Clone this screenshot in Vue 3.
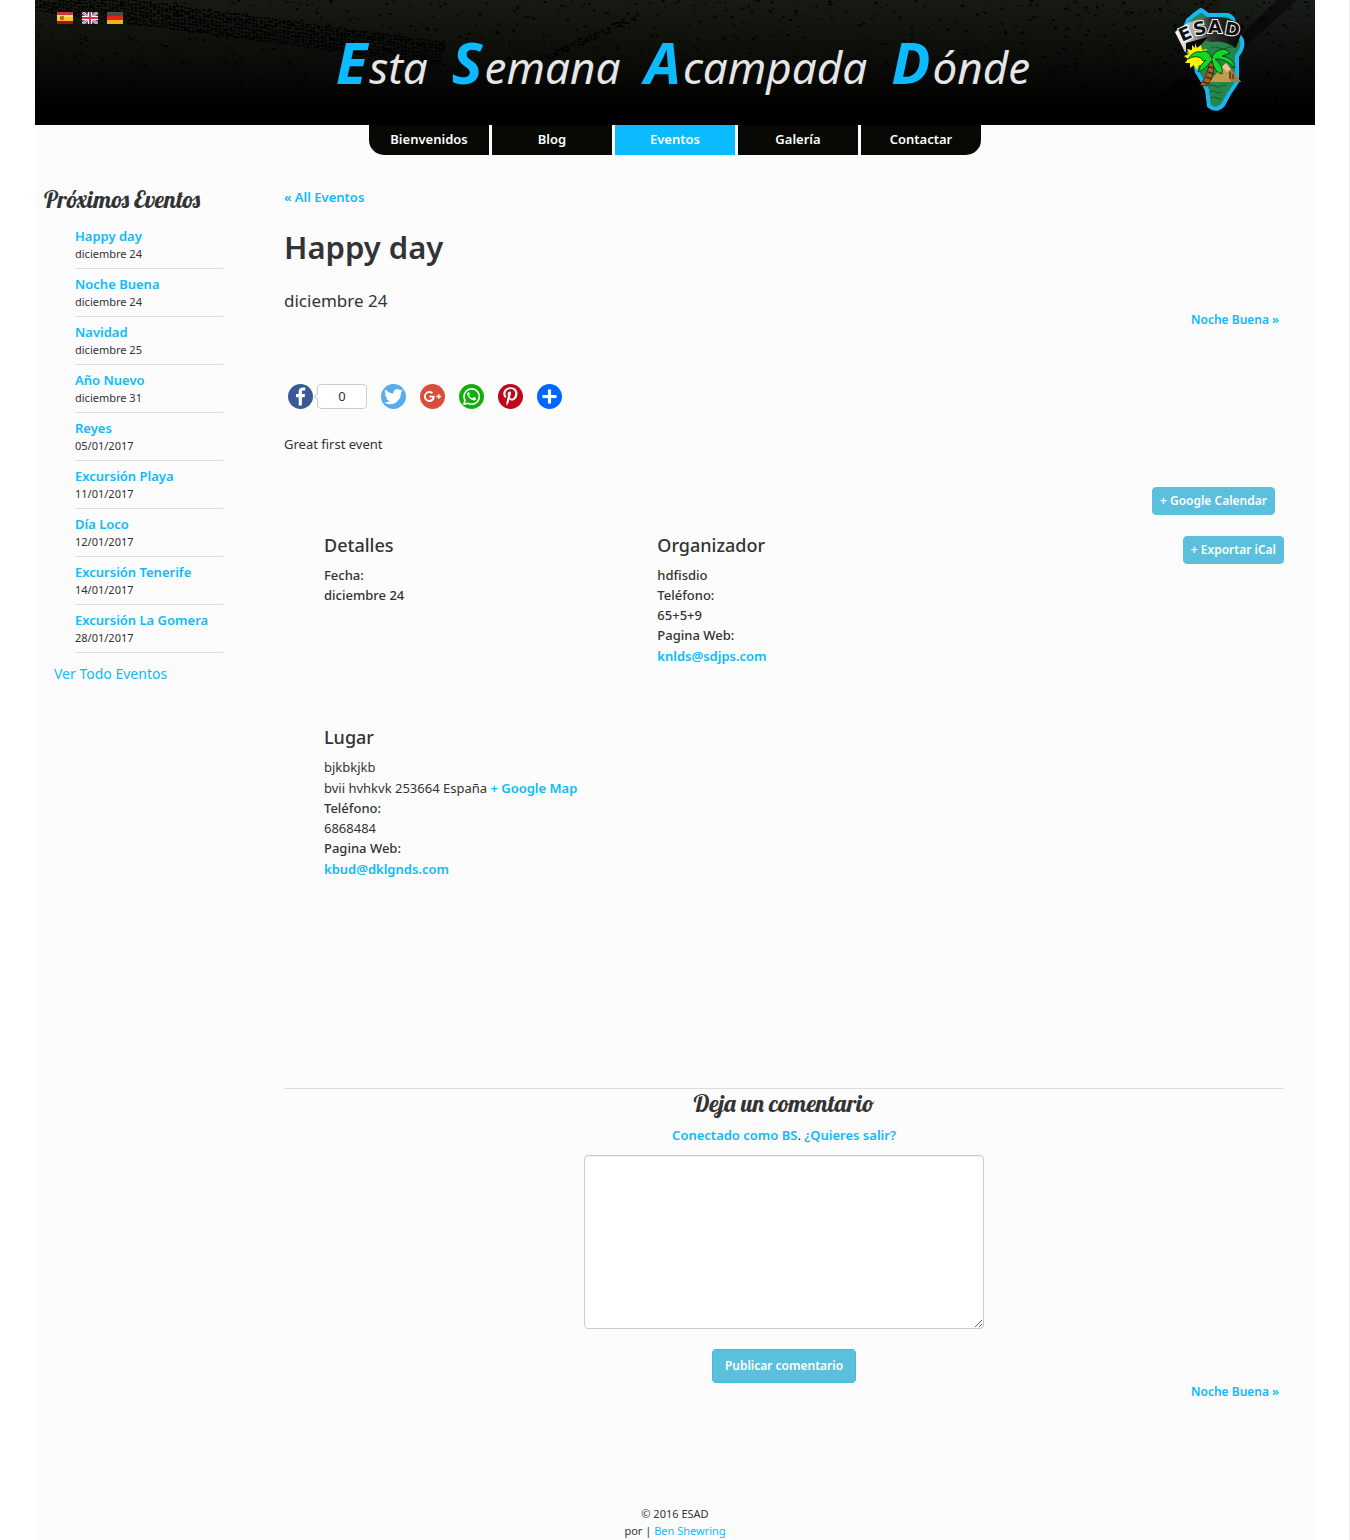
<script setup>
import { ref } from 'vue'

const navItems = [
  { label: 'Bienvenidos' },
  { label: 'Blog' },
  { label: 'Eventos', active: true },
  { label: 'Galería' },
  { label: 'Contactar' },
]

const titleWords = [
  ['E', 'sta'],
  ['S', 'emana'],
  ['A', 'campada'],
  ['D', 'ónde'],
]

const upcoming = [
  { title: 'Happy day', date: 'diciembre 24' },
  { title: 'Noche Buena', date: 'diciembre 24' },
  { title: 'Navidad', date: 'diciembre 25' },
  { title: 'Año Nuevo', date: 'diciembre 31' },
  { title: 'Reyes', date: '05/01/2017' },
  { title: 'Excursión Playa', date: '11/01/2017' },
  { title: 'Día Loco', date: '12/01/2017' },
  { title: 'Excursión Tenerife', date: '14/01/2017' },
  { title: 'Excursión La Gomera', date: '28/01/2017' },
]

const comment = ref('')

// Seeded generator so that the grit of the banner is the same on every load
let seed = 7
function rand() {
  seed = (seed * 16807) % 2147483647
  return seed / 2147483647
}

function blob(x, y, r) {
  return `M${x.toFixed(1)} ${y.toFixed(1)}h${(r * 1.4).toFixed(1)}l${(r * 0.4).toFixed(1)} ${r.toFixed(1)}h${(-r * 1.5).toFixed(1)}z`
}

const specks = Array.from({ length: 1100 }, () =>
  blob(rand() * 1280, Math.pow(rand(), 1.2) * 110, 0.7 + rand() * 1.6)
).join('')

const tread = Array.from({ length: 860 }, (_, i) => {
  const x = Math.floor(i / 8) * 3.8
  const y = (i % 8) * 3.2 + x * 0.135 - 14 + rand() * 2
  return blob(x + rand(), y, 1.4 + rand() * 0.8)
}).join('')

const skid = Array.from({ length: 120 }, () => {
  const t = rand()
  return blob(495 + t * 110, 60 - t * 50 + rand() * 7, 0.6 + rand() * 1.6)
}).join('')
</script>

<template>
  <div class="page">
    <header class="banner">
      <svg class="grit" viewBox="0 0 1280 125" preserveAspectRatio="xMidYMin slice" aria-hidden="true">
        <defs>
          <linearGradient id="fade" x1="0" y1="0" x2="0" y2="1">
            <stop offset="0" stop-color="#171a12" />
            <stop offset="0.45" stop-color="#0c0d09" />
            <stop offset="0.85" stop-color="#010101" />
            <stop offset="1" stop-color="#000" />
          </linearGradient>
          <linearGradient id="glow" x1="0" y1="0" x2="0" y2="1">
            <stop offset="0" stop-color="#1b2322" />
            <stop offset="1" stop-color="#000" stop-opacity="0" />
          </linearGradient>
        </defs>
        <rect width="1280" height="125" fill="url(#fade)" />
        <path d="M1190 0H1280V30L1190 110H1100L1150 60Z" fill="url(#glow)" opacity=".4" />
        <path d="M1242 0H1262L1184 70L1150 96H1120L1190 50Z" fill="#000" opacity=".5" />
        <path :d="specks" fill="#000" opacity=".85" />
        <path :d="tread" fill="#000" />
        <path :d="skid" fill="#000" />
      </svg>

      <div class="languages">
        <a href="#es" aria-label="Español">
          <svg width="16" height="12" viewBox="0 0 16 12">
            <path fill="#c33a45" d="M0 0h16v3H0z" /><path fill="#a5121e" d="M0 9h16v3H0z" />
            <path fill="#f3c72c" d="M0 3h16v6H0z" /><path fill="#f8dc6a" d="M0 3h16v2H0z" />
            <path fill="#b5793c" d="M3 4h4v4H3z" /><path fill="#8d5a55" d="M4 5h2v2H4z" />
          </svg>
        </a>
        <a href="#en" aria-label="English">
          <svg width="16" height="12" viewBox="0 0 16 12">
            <path fill="#2f4d94" d="M0 0h16v12H0z" />
            <path stroke="#f2f2f6" stroke-width="2.6" d="M0 0l16 12M16 0L0 12" />
            <path stroke="#d0374a" d="M0 0l16 12M16 0L0 12" />
            <path fill="#fff" d="M6 0h4v12H6zM0 4h16v4H0z" />
            <path fill="#d3303f" d="M7 0h2v12H7zM0 5h16v2H0z" />
          </svg>
        </a>
        <a href="#de" aria-label="Deutsch">
          <svg width="16" height="12" viewBox="0 0 16 12">
            <path fill="#4d4d4d" d="M0 0h16v4H0z" /><path fill="#e8201a" d="M0 4h16v4H0z" />
            <path fill="#e9b912" d="M0 8h16v4H0z" />
          </svg>
        </a>
      </div>

      <div class="site-title">
        <span v-for="word in titleWords" :key="word[0]"><b>{{ word[0] }}</b>{{ word[1] }}</span>
      </div>

      <svg class="logo" width="72" height="106" viewBox="0 0 72 106" role="img" aria-label="ESAD">
        <defs>
          <linearGradient id="ribbon" x1="0" y1="0" x2="1" y2="0">
            <stop offset="0" stop-color="#fff" /><stop offset=".2" stop-color="#c5c5c5" />
            <stop offset=".5" stop-color="#333" /><stop offset="1" stop-color="#000" />
          </linearGradient>
        </defs>
        <path d="M27 4L34 9L48 9Q56 8 59 13L62 24L68 34Q70 42 63 50Q63 66 63 76L55 88L49 99Q42 106 35 100L33 84L29 76L23 66L20 52L11 42L10 24L14 14L20 9Z" fill="#27864a" stroke="#17b6f5" stroke-width="4" stroke-linejoin="round" />
        <path d="M37 42q4-2 8 0t8 0 8 0M35 74q3-2 6 0t6 0 6 0M35 80q3-2 6 0t6 0 5 0M36 86q3-2 6 0t6 0M37 92q3-2 6 0t4 0M52 62q3-2 8 0M22 58q3-2 6 0" fill="none" stroke="#175c31" stroke-width="1.2" />
        <path d="M1 26Q18 11 40 11Q57 11 70 20L62 42Q49 34 38 36L31 35L22 42L11 46Z" fill="url(#ribbon)" />
        <path d="M12 37L34 31L26 40L20 44L12 46Z" fill="#050505" />
        <path d="M21 37l2 5 4-3 1 5 5-1-2 5 5 2-5 3 3 4-5 0 1 5-5-3-2 5-3-5-4 3 0-5-5 0 3-4-4-3 5-2-2-5 5 1 0-5 3 3z" fill="#fff200" />
        <path d="M35 76L47 62L49 60L52 57L67 76Z" fill="#c59a4e" /><path d="M52 57L67 76H57Z" fill="#a57a34" /><path d="M48 61l4-4 5 6-4 3z" fill="#e8c98b" />
        <path d="M56 66v7M59 68v5" stroke="#573b15" stroke-width="1.5" />
        <path d="M38 51Q43 67 33 80L26 79Q35 68 36 52Z" fill="#a96425" stroke="#3a1d07" stroke-width=".8" />
        <path d="M35 56l6 1M35 61l6 1M34 66l6 2M32 71l6 2M29 76l6 2" stroke="#4b2609" stroke-width="1.4" />
        <path d="M38 53Q34 42 27 46Q20 44 14 53Q21 49 27 52L29 55L32 54Q26 58 24 66Q31 64 38 54Q40 66 48 68Q50 60 41 53Q52 52 61 62Q60 52 48 50L56 47Q50 40 42 46Q38 48 38 53Z" fill="#10d82b" stroke="#053e0c" stroke-width=".9" />
        <text class="logo-text" x="8 21 34 50" y="36 30 27 28" rotate="-24 -14 0 10">ESAD</text>
      </svg>
    </header>

    <nav class="main-nav" aria-label="Principal">
      <a v-for="item in navItems" :key="item.label" href="#" :class="{ active: item.active }">{{ item.label }}</a>
    </nav>

    <div class="columns">
      <aside class="sidebar">
        <h2 class="script-heading">Próximos Eventos</h2>
        <ol class="upcoming">
          <li v-for="event in upcoming" :key="event.title">
            <a class="link" href="#">{{ event.title }}</a>
            <span>{{ event.date }}</span>
          </li>
        </ol>
        <a class="all-link" href="#">Ver Todo Eventos</a>
      </aside>

      <main class="event">
        <a class="link" href="#">« All Eventos</a>
        <h1>Happy day</h1>
        <p class="event-date">diciembre 24</p>
        <div class="pager"><a class="link" href="#">Noche Buena »</a></div>

        <div class="share">
          <a href="#" aria-label="Facebook">
            <svg viewBox="0 0 32 32"><circle cx="16" cy="16" r="16" fill="#3b5998" /><path fill="#fff" d="M17.8 27.500V17h3.500l.5-4.100h-4v-2.600c0-1.200.3-2 2-2h2.200V4.600c-.4 0-1.700-.2-3.100-.2-3.100 0-5.200 1.900-5.200 5.300v3.200h-3.500V17h3.500v10.500z" /></svg>
          </a>
          <span class="count">0</span>
          <a href="#" aria-label="Twitter">
            <svg viewBox="0 0 32 32"><circle cx="16" cy="16" r="16" fill="#55acee" /><path fill="#fff" d="M28 8.600a9.900 9.900 0 0 1-2.800.8 4.900 4.900 0 0 0 2.200-2.700c-1 .5-2 1-3.100 1.200a4.900 4.900 0 0 0-8.500 3.300c0 .4 0 .8.100 1.100-4.200-.2-7.800-2.200-10.200-5.200a4.900 4.900 0 0 0 1.500 6.600c-.8 0-1.600-.2-2.200-.6v.1c0 2.400 1.700 4.400 3.900 4.800a4.900 4.900 0 0 1-2.200.1 4.900 4.900 0 0 0 4.600 3.400A9.900 9.900 0 0 1 4 23.600a13.900 13.900 0 0 0 7.500 2.200c9.100 0 14-7.500 14-14v-.6A10 10 0 0 0 28 8.600z" /></svg>
          </a>
          <a href="#" aria-label="Google Plus">
            <svg viewBox="0 0 32 32"><circle cx="16" cy="16" r="16" fill="#dd4b39" /><path fill="#fff" d="M27 15h-2v-2h-2v2h-2v2h2v2h2v-2h2zM12 15v2.400h4c-.2 1-1.200 3-4 3a4.400 4.400 0 0 1 0-8.800c1.400 0 2.300.6 2.800 1.100l1.900-1.800A6.700 6.700 0 0 0 12 9a7 7 0 1 0 0 14c4 0 6.700-2.800 6.700-6.800l-.1-1.200z" /></svg>
          </a>
          <a href="#" aria-label="WhatsApp">
            <svg viewBox="0 0 32 32"><circle cx="16" cy="16" r="16" fill="#12af0a" /><path d="M6.300 26l1.400-5.100a9.800 9.800 0 1 1 3.700 3.700z" fill="none" stroke="#fff" stroke-width="2" stroke-linejoin="round" /><path fill="#fff" d="M12.200 10.400c-.5 0-1.700.8-1.700 2.500 0 1.900 1.300 3.600 3.200 5.300 2 1.800 3.900 2.800 5.600 2.800 1.200 0 2.600-1.100 2.700-2.400 0-.5 0-.6-.4-.8l-2.300-1.100c-.4-.2-.6-.1-.9.300l-.9 1.100c-.3.300-.5.200-.8.100-1.800-.8-3-1.900-3.900-3.500-.2-.3 0-.5.200-.7.500-.5.800-1 .8-1.300l-1-2.300z" /></svg>
          </a>
          <a href="#" aria-label="Pinterest">
            <svg viewBox="0 0 32 32"><circle cx="16" cy="16" r="16" fill="#bd081c" /><path fill="#fff" d="M16.500 4C10.300 4 6.800 8.400 6.800 12.500c0 2.300.9 4.400 2.800 5.200.3.100.6 0 .7-.3l.3-1.200c.1-.3 0-.5-.2-.7-.6-.7-.9-1.500-.9-2.700 0-3.500 2.600-6.500 6.700-6.500 3.700 0 5.700 2.200 5.700 5.200 0 4-1.700 7.300-4.300 7.300-1.400 0-2.500-1.200-2.100-2.600.4-1.700 1.200-3.500 1.200-4.700 0-1.100-.6-2-1.800-2-1.400 0-2.600 1.500-2.600 3.500 0 1.200.4 2.100.4 2.100l-1.700 7.200c-.5 2.100-.1 4.700 0 5 0 .1.200.2.300.1.100-.2 1.800-2.200 2.400-4.300l.9-3.600c.5.900 1.800 1.700 3.200 1.700 4.200 0 7.100-3.900 7.100-9C24.900 7.600 21.600 4 16.500 4z" /></svg>
          </a>
          <a href="#" aria-label="Compartir">
            <svg viewBox="0 0 32 32"><circle cx="16" cy="16" r="16" fill="#0166ff" /><path fill="#fff" d="M14 7h4v18h-4z" /><path fill="#fff" d="M7 14h18v4H7z" /></svg>
          </a>
        </div>

        <p class="description">Great first event</p>

        <div class="calendar-row"><a class="btn btn-small" href="#">+ Google Calendar</a></div>

        <div class="details">
          <section>
            <h3>Detalles</h3>
            <dl class="strong">
              <dt>Fecha:</dt>
              <dd>diciembre 24</dd>
            </dl>
          </section>
          <section>
            <h3>Organizador</h3>
            <dl class="strong">
              <dd>hdfisdio</dd>
              <dt>Teléfono:</dt>
              <dd>65+5+9</dd>
              <dt>Pagina Web:</dt>
              <dd class="with-link"><a class="link" href="#">knlds@sdjps.com</a></dd>
            </dl>
          </section>
          <div class="export"><a class="btn btn-small" href="#">+ Exportar iCal</a></div>
          <section class="venue">
            <h3>Lugar</h3>
            <dl>
              <dd>bjkbkjkb</dd>
              <dd class="with-link">bvii hvhkvk 253664 España <a class="link" href="#">+ Google Map</a></dd>
              <dt>Teléfono:</dt>
              <dd>6868484</dd>
              <dt>Pagina Web:</dt>
              <dd class="with-link"><a class="link" href="#">kbud@dklgnds.com</a></dd>
            </dl>
          </section>
        </div>

        <form class="comments" @submit.prevent>
          <h2 class="script-heading"><label for="comment">Deja un comentario</label></h2>
          <p><a class="link" href="#">Conectado como BS</a>. <a class="link" href="#">¿Quieres salir?</a></p>
          <textarea id="comment" v-model="comment"></textarea>
          <button class="btn" type="submit">Publicar comentario</button>
        </form>
        <div class="pager"><a class="link" href="#">Noche Buena »</a></div>
      </main>
    </div>

    <footer class="footer">
      <p>© 2016 ESAD</p>
      <p>por | <a href="#">Ben Shewring</a></p>
    </footer>
  </div>
</template>

<style>
body {
  background: #fff;
  border-right: 1px solid #eee;
}
</style>

<style scoped>
.page {
  margin: 0 34px 0 35px;
  background: #fcfcfc;
  color: #333;
  font-family: "Noto Sans", "Open Sans", sans-serif;
  font-size: 13px;
  line-height: 20px;
}

h1, h2, h3, p, ol, dl, dd {
  margin: 0;
  padding: 0;
}

a {
  color: #0bbaff;
  text-decoration: none;
}

.link {
  font-weight: 600;
}

.banner {
  position: relative;
  display: flex;
  justify-content: center;
  height: 125px;
  overflow: hidden;
  background: #000;
}

.grit {
  position: absolute;
  inset: 0;
  width: 100%;
  height: 100%;
}

.languages {
  position: absolute;
  top: 12px;
  left: 22px;
  display: flex;
  gap: 9px;
}

.languages svg {
  display: block;
}

.site-title {
  position: relative;
  display: flex;
  align-items: baseline;
  gap: 24px;
  padding-top: 26px;
  padding-left: 16px;
  color: #e6e6e6;
  font-size: 44px;
  font-style: italic;
  line-height: 72px;
}

.site-title b {
  margin-right: 2px;
  color: #0bbaff;
  font-size: 58px;
}

.logo {
  position: absolute;
  top: 6px;
  right: 69px;
  overflow: visible;
}

.logo-text {
  fill: #111;
  stroke: #fff;
  stroke-width: 2px;
  paint-order: stroke;
  font-family: "DejaVu Sans", sans-serif;
  font-size: 18px;
  font-weight: 700;
}

.main-nav {
  display: flex;
  justify-content: center;
  gap: 3px;
}

.main-nav a {
  width: 120px;
  padding-bottom: 2px;
  background: #080805;
  color: #fff;
  font-weight: 600;
  line-height: 28px;
  text-align: center;
}

.main-nav a.active {
  background: #0bbaff;
}

.main-nav a:first-child {
  border-bottom-left-radius: 15px;
}

.main-nav a:last-child {
  border-bottom-right-radius: 15px;
}

.columns {
  display: flex;
  padding-right: 31px;
}

.sidebar {
  flex: none;
  box-sizing: border-box;
  width: 249px;
  padding: 30px 61px 0 9px;
}

.script-heading {
  font-family: Lobster, "Liberation Serif", serif;
  font-size: 24px;
  font-weight: 400;
  line-height: 28px;
  white-space: nowrap;
}

.upcoming {
  margin: 8px 0 0 31px;
  list-style: none;
}

.upcoming li {
  display: flex;
  flex-direction: column;
  padding: 6px 0 5px;
  border-bottom: 1px solid #ddd;
  line-height: 18px;
}

.upcoming span {
  font-size: 11px;
}

.all-link {
  display: block;
  margin: 11px 0 0 10px;
  font-size: 14px;
}

.event {
  flex: 1;
  min-width: 0;
  padding-top: 32px;
}

.event > .link {
  display: block;
}

h1 {
  margin-top: 20px;
  font-size: 31px;
  font-weight: 600;
  line-height: 40px;
}

.event-date {
  margin-top: 24px;
  font-size: 17px;
}

.pager {
  padding-right: 5px;
  font-size: 12px;
  line-height: 18px;
  text-align: right;
}

.share {
  display: flex;
  gap: 14px;
  margin-top: 55px;
  padding-left: 4px;
}

.share a,
.share svg {
  display: block;
  width: 25px;
  height: 25px;
}

.count {
  position: relative;
  box-sizing: border-box;
  width: 50px;
  margin-left: -10px;
  border: 1px solid #ccc;
  border-radius: 4px;
  background: #fff;
  line-height: 23px;
  text-align: center;
}

.count::before {
  content: "";
  position: absolute;
  top: 9px;
  left: -3px;
  width: 4px;
  height: 4px;
  border: solid #ccc;
  border-width: 0 0 1px 1px;
  background: #fff;
  transform: rotate(45deg);
}

.description {
  margin-top: 25px;
}

.calendar-row {
  display: flex;
  justify-content: flex-end;
  margin-top: 33px;
  padding-right: 9px;
}

.btn {
  display: block;
  padding: 0 12px;
  border: 1px solid #46b8da;
  border-radius: 4px;
  background: #5bc0de;
  color: #fff;
  font-family: inherit;
  font-size: 12px;
  font-weight: 600;
  line-height: 32px;
}

.btn-small {
  padding: 0 7px;
  border-color: #5bc0de;
  line-height: 26px;
}

.details {
  display: grid;
  grid-template-columns: repeat(3, 1fr);
  grid-template-rows: 192px 360px;
  margin-top: 21px;
}

.details section {
  padding-left: 40px;
}

.details h3 {
  margin-bottom: 11px;
  font-size: 18px;
  font-weight: 500;
  line-height: 18px;
}

.details dt,
.strong {
  font-weight: 500;
}

.with-link {
  padding-top: 1px;
}

.export {
  display: flex;
  align-items: flex-start;
  justify-content: flex-end;
}

.comments {
  display: flex;
  flex-direction: column;
  align-items: center;
  border-top: 1px solid #ddd;
}

.comments p {
  margin: 8px 0 10px;
}

.comments textarea {
  box-sizing: border-box;
  width: 400px;
  max-width: 100%;
  height: 174px;
  margin-bottom: 20px;
  padding: 6px 12px;
  border: 1px solid #ccc;
  border-radius: 4px;
  background: #fff;
  box-shadow: inset 0 1px 1px rgba(0, 0, 0, 0.08);
  font: inherit;
}

.footer {
  margin-top: 104px;
  padding-bottom: 1px;
  font-size: 11px;
  line-height: 17px;
  text-align: center;
}
</style>
